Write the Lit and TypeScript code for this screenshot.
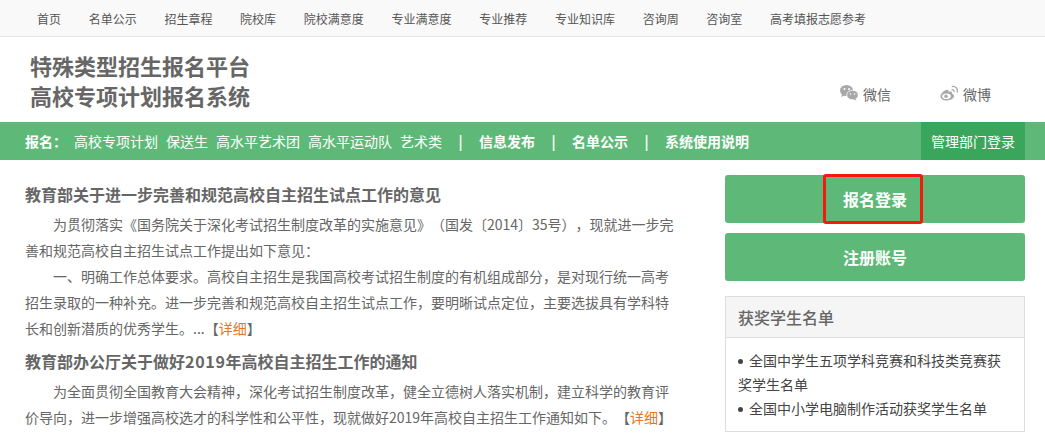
import { LitElement, html, css } from "lit";
import { customElement } from "lit/decorators.js";

const NAV = ["首页","名单公示","招生章程","院校库","院校满意度","专业满意度","专业推荐","专业知识库","咨询周","咨询室","高考填报志愿参考"];

@customElement("app-root")
export class AppRoot extends LitElement {
  static styles = css`
    :host { display: block; width: 1045px; height: 440px; overflow: hidden; background: #fff; position: relative;
      font-family: "Noto Sans CJK SC", "Liberation Sans", sans-serif; color: #666; font-size: 14px; text-spacing-trim: space-all; }
    .top { height: 36px; background: #f9f9f9; border-bottom: 1px solid #e5e5e5; display: flex; align-items: center; gap: 27.7px; padding-left: 37px; font-size: 12px; color: #555; }
    .brand { height: 85px; display: flex; justify-content: space-between; padding: 0 54px 0 30px; }
    .title { margin: 13px 0 0; font-size: 22px; line-height: 30px; font-weight: 700; color: #666; }
    .social { display: flex; gap: 49px; align-items: center; margin-top: 31px; height: 52px; color: #666; }
    .social > div { display: flex; align-items: center; gap: 5px; }
    .social svg { display: block; margin-top: -2px; }
    .bar { height: 38px; background: #5eb978; color: #fff; display: flex; align-items: center; padding: 0 20px 0 25px; line-height: 38px; }
    .bar b { font-weight: 700; }
    .bar .lead { margin-right: 7px; }
    .bar .sub { margin-right: 8px; }
    .bar .sep { width: 4px; text-align: center; margin: 0 16.5px; }
    .bar .admin { margin-left: auto; width: 104px; text-align: center; background: #3aa65b; }
    .main { display: flex; justify-content: space-between; padding: 0 20px 0 25px; }
    .art { width: 660px; padding-top: 21px; }
    h2 { margin: 0; font-size: 16px; font-weight: 700; line-height: 26px; color: #666; }
    .num { letter-spacing: .7px; }
    .art h2 + p { margin-top: 4px; }
    .art p + h2 { margin-top: 7px; }
    p { margin: 0; line-height: 26px; text-indent: 28px; white-space: nowrap; }
    p.cont { text-indent: 0; }
    .more { color: #e6761d; }
    .side { width: 300px; padding-top: 15px; }
    .btn { height: 48px; line-height: 48px; background: #5eb978; color: #fff; text-align: center; font-size: 16px; font-weight: 700; border-radius: 3px; margin-bottom: 10px; }
    .panel { margin-top: 15px; border: 1px solid #ddd; }
    .phead { height: 40px; line-height: 40px; background: #f5f5f5; border-bottom: 1px solid #ddd; padding-left: 12px; font-size: 16px; font-weight: 500; }
    .pbody { padding: 10px 12px 11px; line-height: 24px; color: #444; }
    .dot { display: inline-block; width: 5px; height: 5px; border-radius: 50%; background: #444; margin: 0 6px 2px 0; vertical-align: middle; }
    .mark { position: absolute; left: 823px; top: 174px; width: 100px; height: 50px; box-sizing: border-box; border: 3px solid #f5190f; border-radius: 3px; }
  `;

  render() {
    return html`
      <div class="top">${NAV.map((n) => html`<span>${n}</span>`)}</div>
      <div class="brand">
        <h1 class="title">特殊类型招生报名平台<br />高校专项计划报名系统</h1>
        <div class="social">
          <div>
            <svg width="18" height="16" viewBox="0 0 18 16"><ellipse cx="6.500" cy="5.500" rx="6.500" ry="5.500" fill="#a8a8a8"/><path d="M2 9l-.8 3 3.500-1.800z" fill="#a8a8a8"/><ellipse cx="12.500" cy="10" rx="5.800" ry="4.800" fill="#a8a8a8" stroke="#fff" stroke-width=".8"/><path d="M15.500 13.500l1 2-3-1z" fill="#a8a8a8"/><circle cx="4.500" cy="4" r="1" fill="#fff"/><circle cx="9" cy="4" r="1" fill="#fff"/><circle cx="10.500" cy="9" r=".8" fill="#fff"/><circle cx="14.500" cy="9" r=".8" fill="#fff"/></svg>
            <span>微信</span>
          </div>
          <div>
            <svg width="18" height="16" viewBox="0 0 18 16" fill="none"><path d="M7 15.500c-3.500 0-6.500-1.500-6.500-4S3.500 6 6 5c2-.8 3 .2 2.500 1.800 1.800-.7 3.500-.5 3.500 1 0 .5-.2.800-.2.800 1.200.4 2.200 1.200 2.200 2.500 0 2.500-3.500 4.400-7 4.400z" fill="#a8a8a8"/><ellipse cx="6.500" cy="11.200" rx="4.300" ry="2.800" fill="#fff"/><circle cx="6" cy="11.200" r="1.700" fill="#a8a8a8"/><path d="M11.500 4.800c1.800-.5 3 .8 2.500 2.500" stroke="#a8a8a8" stroke-width="1.300"/><path d="M11.800 1.500c3.700-.7 6.500 2 5.300 6" stroke="#a8a8a8" stroke-width="1.300"/></svg>
            <span>微博</span>
          </div>
        </div>
      </div>
      <div class="bar">
        <b class="lead">报名：</b>
        <span class="sub">高校专项计划</span><span class="sub">保送生</span><span class="sub">高水平艺术团</span><span class="sub">高水平运动队</span><span>艺术类</span>
        <b class="sep">|</b><b>信息发布</b><b class="sep">|</b><b>名单公示</b><b class="sep">|</b><b>系统使用说明</b>
        <span class="admin">管理部门登录</span>
      </div>
      <div class="main">
        <div class="art">
          <h2>教育部关于进一步完善和规范高校自主招生试点工作的意见</h2>
          <p>为贯彻落实《国务院关于深化考试招生制度改革的实施意见》（国发〔2014〕35号），现就进一步完</p>
          <p class="cont">善和规范高校自主招生试点工作提出如下意见：</p>
          <p>一、明确工作总体要求。高校自主招生是我国高校考试招生制度的有机组成部分，是对现行统一高考</p>
          <p class="cont">招生录取的一种补充。进一步完善和规范高校自主招生试点工作，要明晰试点定位，主要选拔具有学科特</p>
          <p class="cont">长和创新潜质的优秀学生。...【<span class="more">详细</span>】</p>
          <h2>教育部办公厅关于做好<span class="num">2019</span>年高校自主招生工作的通知</h2>
          <p>为全面贯彻全国教育大会精神，深化考试招生制度改革，健全立德树人落实机制，建立科学的教育评</p>
          <p class="cont">价导向，进一步增强高校选才的科学性和公平性，现就做好2019年高校自主招生工作通知如下。【<span class="more">详细</span>】</p>
        </div>
        <div class="side">
          <div class="btn">报名登录</div>
          <div class="btn">注册账号</div>
          <div class="panel">
            <div class="phead">获奖学生名单</div>
            <div class="pbody">
              <div><span class="dot"></span>全国中学生五项学科竞赛和科技类竞赛获奖学生名单</div>
              <div><span class="dot"></span>全国中小学电脑制作活动获奖学生名单</div>
            </div>
          </div>
        </div>
      </div>
      <div class="mark"></div>
    `;
  }
}
